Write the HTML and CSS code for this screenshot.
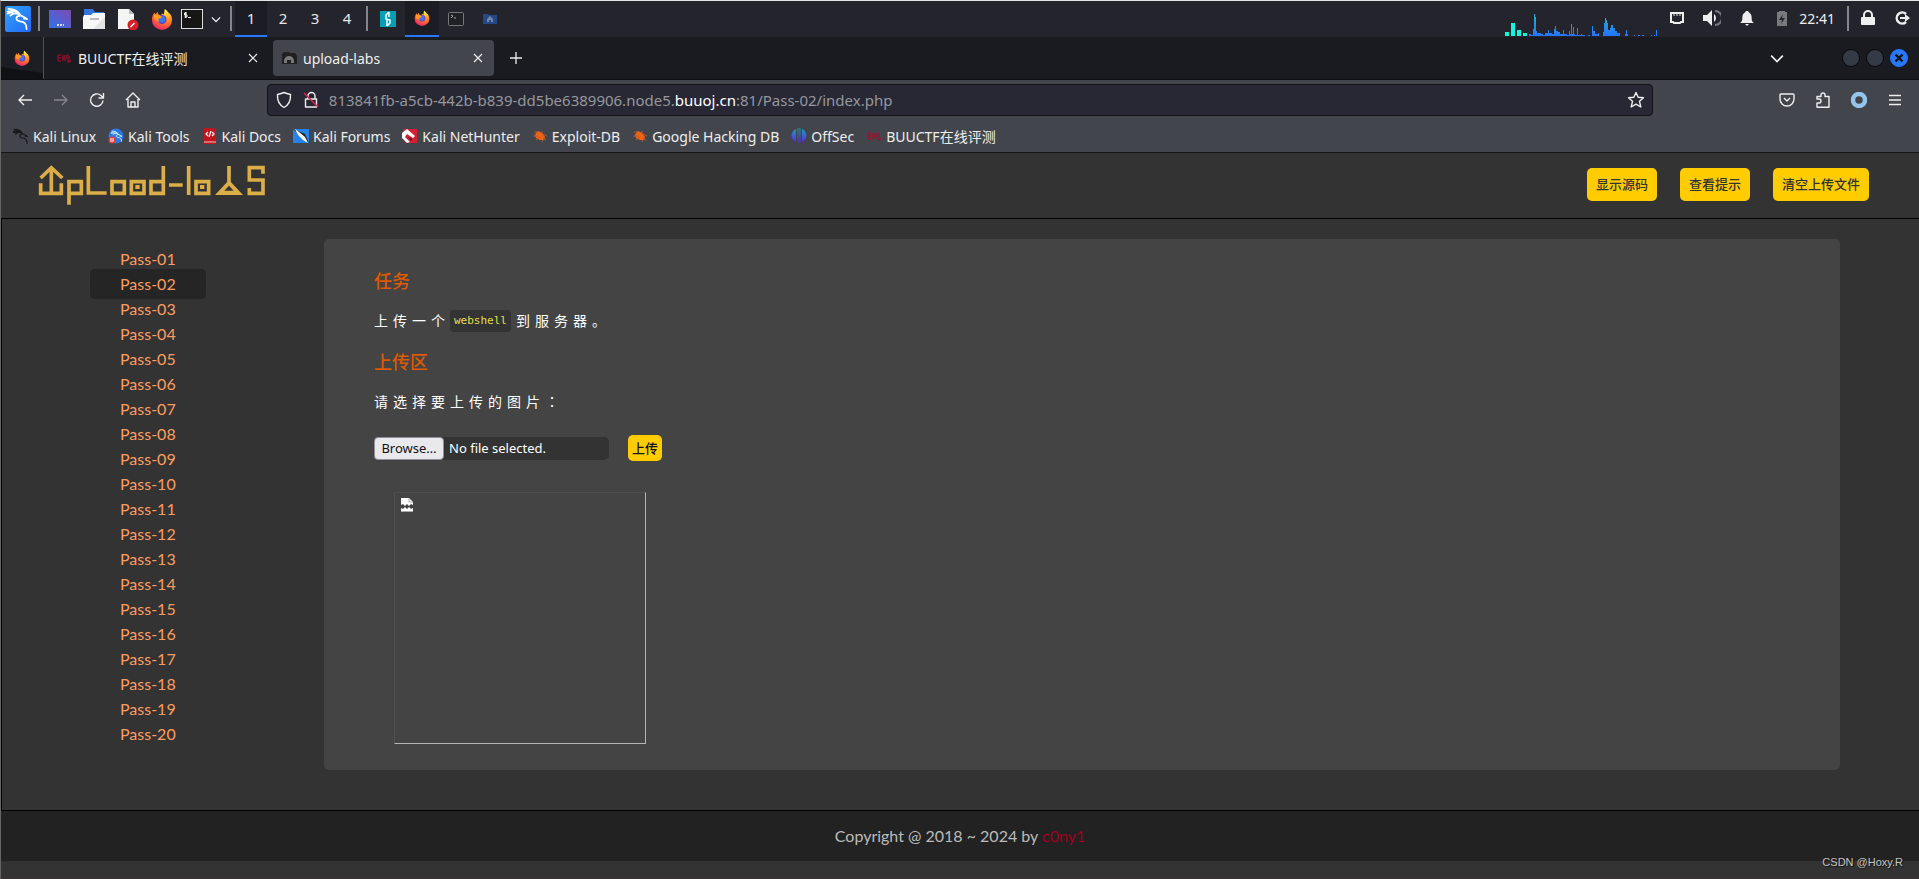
FILE: index.html
```html
<!DOCTYPE html>
<html lang="zh-CN">
<head>
<meta charset="utf-8">
<title>upload-labs</title>
<link rel="stylesheet" href="styles.css">
</head>
<body>
<svg class="defs" aria-hidden="true">
  <defs>
    <radialGradient id="fx" cx="0.7" cy="0.1" r="1"><stop offset="0" stop-color="#fff04a"/><stop offset="0.35" stop-color="#ffa51e"/><stop offset="0.7" stop-color="#ff5a3c"/><stop offset="1" stop-color="#e3197a"/></radialGradient>
    <linearGradient id="kb" x1="0" y1="0" x2="1" y2="1"><stop offset="0" stop-color="#2fa4fb"/><stop offset="1" stop-color="#2468f5"/></linearGradient>
    <linearGradient id="desk" x1="0" y1="1" x2="1" y2="0"><stop offset="0" stop-color="#3272e6"/><stop offset="1" stop-color="#7e4ab4"/></linearGradient>
    <linearGradient id="off" x1="0" y1="0" x2="0" y2="1"><stop offset="0" stop-color="#17a8b5"/><stop offset="1" stop-color="#5a22e8"/></linearGradient>
    <linearGradient id="graph" x1="0" y1="38" x2="0" y2="105" gradientUnits="userSpaceOnUse"><stop offset="0" stop-color="#18b9d2"/><stop offset="1" stop-color="#2673ff"/></linearGradient>
  </defs>
  <symbol id="firefox" viewBox="0 0 24 24"><path fill="url(#fx)" d="M15 1c2 1 3 3 4 4 3 2 4 5 4 8a11 11 0 0 1-22 0c0-3 1-6 3-8l1 2 2-3 1 3 3 1 1-2 2 1z"/><circle cx="12" cy="12.500" r="5" fill="#6040c8"/><path fill="#3b75e8" d="M8 14a4.500 4.500 0 0 0 8-1l-2-5-4 3z"/><path fill="#ff9a22" d="M3 7l5 1 4 1-1 2-3 1 1 3-3-1-3-2z"/></symbol>
  <symbol id="dragon" viewBox="0 0 24 24"><path d="M1 5c6-2 10-1 14 4M2 2c6 0 10 2 13 7M4 9c3-3 7-3 11 0l4 2 3 2-4-1M15 9c-6 0-6 5-1 6 5 0 7 3 7 8M1 7c4-2 6-1 7 0" fill="none" stroke="currentColor" stroke-width="1.800" stroke-linecap="round"/></symbol>
  <symbol id="buu" viewBox="0 0 16 16"><path d="M2 5h3M2 8h3M2 11h3M2 5v6M7 5v6M7 8h2M9 5v6M11 5v4M11 5h2M13 6v3M12 10h2v2h-2z" fill="none" stroke="#a50d2c" stroke-width="1.200"/></symbol>
  <symbol id="bug" viewBox="0 0 16 16"><path fill="#ef6414" d="M4 5l2-2 4 2 3 4-1 3-4 0-4-2-1-3z"/><path d="M2 4h4M1 8h5M4 12l4-3M10 3l0 3M11 6l4 2M10 14l2-4M14 12l-3-2" fill="none" stroke="#b65b2c" stroke-width="1"/></symbol>
  <symbol id="close" viewBox="0 0 12 12"><path d="M2 2l8 8M10 2l-8 8" stroke="currentColor" stroke-width="1.200"/></symbol>
  <symbol id="down" viewBox="0 0 12 12"><path d="M1 4l5 5 5-5" fill="none" stroke="currentColor" stroke-width="1.500"/></symbol>
</svg>

<div class="screen">
  <div class="desktop-panel">
    <button class="cell" aria-label="Applications"><svg class="s26" viewBox="0 0 26 26"><rect width="26" height="26" rx="2" fill="url(#kb)"/><svg x="1" y="1" width="24" height="23" color="#fff"><use href="#dragon"/></svg></svg></button>
    <i class="sep"></i>
    <button class="cell" aria-label="Desktop"><svg class="s22" viewBox="0 0 22 22"><rect y="2" width="22" height="18" fill="url(#desk)"/><path d="M8 17h2M11 17h2M14 17h1" stroke="#fff" stroke-width="1.500"/></svg></button>
    <button class="cell" aria-label="Files"><svg class="s22" viewBox="0 0 22 22"><path d="M1 1h9l2 3h9v5H1z" fill="#3274dc"/><path d="M0 9l1-2h7l2-2h12v16H0z" fill="#f7f7f7"/><path d="M22 9v12H10z" fill="#e4e4e4"/><path d="M7 11h9" stroke="#bbb" stroke-width="2"/></svg></button>
    <button class="cell" aria-label="Text editor"><svg class="s22" viewBox="0 0 22 22"><path d="M1 1h11l5 5v15H1z" fill="#f5f5f5"/><path d="M12 1v5h5z" fill="#bbb"/><circle cx="16" cy="17" r="5.500" fill="#d61f26"/><path d="M13.500 19l4-4" stroke="#fff" stroke-width="1.500"/></svg></button>
    <button class="cell" aria-label="Firefox"><svg class="s22"><use href="#firefox"/></svg></button>
    <button class="cell narrow" aria-label="Terminal"><svg class="s22" viewBox="0 0 22 22"><rect x="0.500" y="1.500" width="21" height="19" fill="#161616" stroke="#ddd"/><path d="M6 5H3.500v2H6v2H3.500M4.700 4v6M7 9.500h3" fill="none" stroke="#fff"/></svg></button>
    <button class="cell tight" aria-label="More terminals"><svg class="s10"><use href="#down"/></svg></button>
    <i class="sep"></i>
    <button class="space on">1</button><button class="space">2</button><button class="space">3</button><button class="space">4</button>
    <i class="sep"></i>
    <button class="cell" aria-label="Burp Suite"><svg class="s16" viewBox="0 0 16 16"><rect width="16" height="16" fill="#049fb4"/><path d="M9 1L6 4v4l4 1v3l-3 3M9 1v5M7 9v6" fill="none" stroke="#fff" stroke-width="1.500"/></svg></button>
    <button class="cell on" aria-label="Firefox window"><svg class="s16"><use href="#firefox"/></svg></button>
    <button class="cell" aria-label="Terminal window"><svg class="s16" viewBox="0 0 16 16"><rect x="0.500" y="1.500" width="15" height="13" rx="1" fill="#202124" stroke="#77777b"/><path d="M3 4l2 1-2 2M6 7h2" fill="none" stroke="#aaa"/></svg></button>
    <button class="cell" aria-label="Files window"><svg class="s16" viewBox="0 0 16 16"><path d="M1 3h5l1 1h8v9H1z" fill="#254986"/><path d="M8 5l3 3v3H9V9H7v2H5V8z" fill="#7187aa"/></svg></button>
    <div class="panel-right">
      <svg class="graph" viewBox="75 36 465 69"><path fill="#0ff7dc" d="M78 93h12v12H78zM96 66h12v39H96zM114 87h12v18h-12zM132 96h12v9h-12z"/><path fill="url(#graph)" d="M150 105v-6h6v3h6v-18h3V39h3v9h3v42h3v6h12v3h6v3h6v-6h9v-9h3v9h9v3h6v-15h3v-9h3v15h6v3h6v6h9v-12h3v12h9v3h6v-12h3v9h3v-30h3v30h3v-21h3v21h3v3h6v-21h3v21h9v-3h3v3h9v3h9v-3h6v3h6v-30h3v15h6v9h9v-3h3v9h12v-12h3v-27h3v-15h3v6h3v9h3v21h6v-6h3v-9h6v9h6v9h6v6h9v12h9v-3h3v3h3v-9h3v-12h3v12h3v9zM465 102h3v3h-3zM477 102h6v3h-6zM489 102h6v3h-6zM516 102h3v3h-3zM525 102h3v3h-3zM531 87h3v18h-3z"/></svg>
      <button class="tray" aria-label="Network"><svg class="s16" viewBox="0 0 16 16"><path d="M2 3h12v9h-2l-1 1H5l-1-1H2z" fill="none" stroke="currentColor" stroke-width="2"/><path d="M5 3v3M8 3v3M11 3v3" stroke="currentColor"/></svg></button>
      <button class="tray" aria-label="Volume"><svg class="s18" viewBox="0 0 18 18"><path d="M0 6h4l5-5v16l-5-5H0z" fill="currentColor"/><path d="M11 5a5 5 0 0 1 0 8z" fill="currentColor"/><path d="M12 2a7 7 0 0 1 0 14" fill="none" stroke="#77787c" stroke-width="2"/></svg></button>
      <button class="tray" aria-label="Notifications"><svg class="s16" viewBox="0 0 16 16"><path d="M1 13c3-2 2-4 2.500-7C4 3 6 3 7 1h2c1 2 3 2 3.500 5 .5 3-.5 5 2.500 7zM6 14h4l-2 2z" fill="currentColor"/></svg></button>
      <button class="tray" aria-label="Battery"><svg class="s16" viewBox="0 0 16 16"><path d="M5 1h6v1h2v14H3V2h2z" fill="#797a7e"/><path d="M9 4L5 10h3l-1 4 4-6H8z" fill="#25262c"/></svg></button>
      <time class="clock">22:41</time>
      <i class="sep last"></i>
      <button class="tray end" aria-label="Lock"><svg class="s16" viewBox="0 0 16 16"><rect x="1" y="7" width="14" height="8" rx="1" fill="currentColor"/><path d="M4 8V5a4 4 0 0 1 8 0v3" fill="none" stroke="currentColor" stroke-width="2"/></svg></button>
      <button class="tray end" aria-label="Log out"><svg class="s16" viewBox="0 0 16 16"><path d="M12 4a5.500 5.500 0 1 0 0 8" fill="none" stroke="currentColor" stroke-width="2.500"/><path d="M6 7h5V4l5 4-5 4V9H6z" fill="currentColor"/></svg></button>
    </div>
  </div>

  <div class="tab-strip">
    <button class="pinned" aria-label="Firefox View"><svg class="s16"><use href="#firefox"/></svg></button>
    <div class="tab"><svg class="s16"><use href="#buu"/></svg><span class="tab-title">BUUCTF在线评测</span><button class="tab-close" aria-label="Close tab"><svg class="s12"><use href="#close"/></svg></button></div>
    <div class="tab active"><svg class="s16" viewBox="0 0 16 16"><path d="M1 4l2-2h5l1 1h5l2 3v8H1z" fill="#202020"/><path d="M3 11a5 5 0 0 1 10 0v2h-3v-3H6v3H3z" fill="#77797c"/></svg><span class="tab-title">upload-labs</span><button class="tab-close" aria-label="Close tab"><svg class="s12"><use href="#close"/></svg></button></div>
    <button class="new-tab" aria-label="New tab"><svg class="s12" viewBox="0 0 12 12"><path d="M6 0v12M0 6h12" stroke="currentColor" stroke-width="1.300"/></svg></button>
    <div class="window-buttons">
      <button class="list-tabs" aria-label="List all tabs"><svg class="s14"><use href="#down"/></svg></button>
      <button class="round" aria-label="Minimize"></button>
      <button class="round" aria-label="Maximize"></button>
      <button class="round quit" aria-label="Close window"><svg class="s12" viewBox="0 0 12 12"><path d="M2.500 2.500l7 7M9.500 2.500l-7 7" stroke="#111" stroke-width="2.400"/></svg></button>
    </div>
  </div>

  <div class="nav-bar">
    <button class="tool" aria-label="Back"><svg class="s16" viewBox="0 0 16 16"><path d="M15 8H2M7 3L2 8l5 5" /></svg></button>
    <button class="tool off" aria-label="Forward"><svg class="s16" viewBox="0 0 16 16"><path d="M1 8h13M9 3l5 5-5 5"/></svg></button>
    <button class="tool" aria-label="Reload"><svg class="s16" viewBox="0 0 16 16"><path d="M14 8.500A6.200 6.200 0 1 1 12 3.500l2 2M14.500 1v5h-5"/></svg></button>
    <button class="tool" aria-label="Home"><svg class="s16" viewBox="0 0 16 16"><path d="M1 8l7-7 7 7M3 7v8h10V7M6 15v-5h4v5"/></svg></button>
    <div class="spring"></div>
    <div class="url-box">
      <svg class="s18 stroke" viewBox="0 0 18 18"><path d="M9 1.500c2 1 4 1.500 6.500 2 .3 5-1 10-6.500 13-5.500-3-6.800-8-6.500-13 2.500-.5 4.500-1 6.500-2z"/></svg>
      <svg class="s18 stroke" viewBox="0 0 18 18"><path d="M3.500 8h11v8h-11zM6 8V5a3.500 3.500 0 0 1 7 0v3"/><path d="M2 2l14 14" class="slash"/></svg>
      <a class="url" href="#">813841fb-a5cb-442b-b839-dd5be6389906.node5.<b>buuoj.cn</b>:81/Pass-02/index.php</a>
      <button class="star" aria-label="Bookmark this page"><svg class="s18 stroke" viewBox="0 0 18 18"><path d="M9 1.500l2.200 4.800 5.300.5-4 3.500 1.300 5.700L9 13.200 4.200 16l1.300-5.700-4-3.500 5.300-.5z"/></svg></button>
    </div>
    <div class="spring"></div>
    <button class="tool" aria-label="Pocket"><svg class="s16" viewBox="0 0 16 16"><path d="M2 2h12q1 0 1 1v4a7 7 0 0 1-14 0V3q0-1 1-1zM5 6l3 3 3-3"/></svg></button>
    <button class="tool" aria-label="Extensions"><svg class="s16" viewBox="0 0 16 16"><path d="M2 15.200V11h2a2 2 0 0 0 0-4H2V4.500h4V3a2 2 0 0 1 4 0v1.500h4v10.700z"/></svg></button>
    <button class="tool" aria-label="Account"><svg class="s16" viewBox="0 0 16 16"><circle class="donut" cx="8" cy="8" r="6"/></svg></button>
    <button class="tool" aria-label="Menu"><svg class="s16" viewBox="0 0 16 16"><path d="M2 3.500h12M2 8h12M2 12.500h12"/></svg></button>
  </div>

  <nav class="bookmarks">
    <a href="#"><svg class="s16 ink"><use href="#dragon"/></svg>Kali Linux</a>
    <a href="#"><svg class="s16" viewBox="0 0 16 16"><circle cx="8" cy="8" r="7.500" fill="#2879e6"/><svg x="3" y="2" width="12" height="12" color="#d9ecff"><use href="#dragon"/></svg><circle cx="4" cy="12" r="3.500" fill="#e33b3b"/><path d="M3 10v4M5 10v4" stroke="#fff"/></svg>Kali Tools</a>
    <a href="#"><svg class="s16" viewBox="0 0 16 16"><path d="M2 0h12v16H2z" fill="#c3141b"/><path d="M2 14h12" stroke="#f1c5c5"/><path d="M6 4L4 6l2 2M10 4l2 2-2 2M9 3L7 9" fill="none" stroke="#fff" stroke-width="1.200"/></svg>Kali Docs</a>
    <a href="#"><svg class="s16" viewBox="0 0 16 16"><path d="M0 1h16v14H0z" fill="#2583ed"/><path d="M0 1l12 5 4 9z" fill="#222"/><path d="M2 1l4 3 6 5 3 6-5-3-5-5z" fill="#fff"/></svg>Kali Forums</a>
    <a href="#"><svg class="s16" viewBox="0 0 16 16"><path d="M1 1h14v14H3z" fill="#d61f35"/><path d="M0 5l5-4 8 7-2 2-6-4-2 3 5 5-3 1-5-5z" fill="#fff"/><path d="M6 9l4 2-1 2z" fill="#222"/></svg>Kali NetHunter</a>
    <a href="#"><svg class="s16"><use href="#bug"/></svg>Exploit-DB</a>
    <a href="#"><svg class="s16"><use href="#bug"/></svg>Google Hacking DB</a>
    <a href="#"><svg class="s16" viewBox="0 0 16 16"><path d="M5 1v13C-1 11-1 4 5 1zM11 1v13c6-3 6-10 0-13zM6.500 0h1v15h-1zM8.500 0h1v15h-1z" fill="url(#off)"/></svg>OffSec</a>
    <a href="#"><svg class="s16"><use href="#buu"/></svg>BUUCTF在线评测</a>
  </nav>

  <header class="site-header">
    <svg class="logo" viewBox="111 45 684 126" role="img" aria-label="upload-labs"><g fill="none" stroke="#dbae48" stroke-width="11"><path d="M119 87l32-31 33 31M151 56v76M119 103v30h62v-30M204 167V98h37v35h-37M262 51v81h55M333 98h37v35h-37zM391 98h38v35h-38zM487 51v82h-37V98h37M504 108h41M563 51v87M585 98h38v35h-38zM684 51v48M786 74V56h-41v37h41v40h-41v-16"/></g><path fill="#dbae48" d="M403 108h13v12h-13zM597 108h13v12h-13z"/><path fill="#dbae48" fill-rule="evenodd" d="M684 93l42 45h-84zM684 110l-14 15h28z"/></svg>
    <div class="actions"><button class="gold">显示源码</button><button class="gold">查看提示</button><button class="gold">清空上传文件</button></div>
  </header>

  <main class="site-main">
    <ul class="menu">
      <li><a href="#">Pass-01</a></li><li><a href="#" class="current">Pass-02</a></li><li><a href="#">Pass-03</a></li><li><a href="#">Pass-04</a></li><li><a href="#">Pass-05</a></li><li><a href="#">Pass-06</a></li><li><a href="#">Pass-07</a></li><li><a href="#">Pass-08</a></li><li><a href="#">Pass-09</a></li><li><a href="#">Pass-10</a></li><li><a href="#">Pass-11</a></li><li><a href="#">Pass-12</a></li><li><a href="#">Pass-13</a></li><li><a href="#">Pass-14</a></li><li><a href="#">Pass-15</a></li><li><a href="#">Pass-16</a></li><li><a href="#">Pass-17</a></li><li><a href="#">Pass-18</a></li><li><a href="#">Pass-19</a></li><li><a href="#">Pass-20</a></li>
    </ul>
    <section class="task">
      <h3>任务</h3>
      <p>上传一个<code>webshell</code>到服务器。</p>
      <h3>上传区</h3>
      <p id="pick">请选择要上传的图片<span class="colon">：</span></p>
      <form class="upload">
        <div class="file" role="group" aria-labelledby="pick"><button type="button" class="browse">Browse…</button><span>No file selected.</span></div>
        <button type="button" class="gold submit">上传</button>
      </form>
      <div class="preview"><svg class="broken" viewBox="0 0 12 14"><path d="M0 0h8l4 4v3l-2-1-2 2-2-2-2 2-2-2-2 1zM0 10l2 1 2-2 2 2 2-2 2 2 2-1v4H0z" fill="#fff"/><path d="M8 0v4h4M0 13.500h12" fill="none" stroke="#aaa"/></svg></div>
    </section>
  </main>

  <footer class="site-footer">Copyright @ 2018 ~ 2024 by&nbsp;<a href="#">c0ny1</a></footer>
  <div class="watermark">CSDN @Hoxy.R</div>
</div>
</body>
</html>
```
FILE: styles.css
```css
* { box-sizing: border-box; }
body { margin: 0; background: #333; font-family: "Noto Sans", "Noto Sans CJK SC", sans-serif; }
button { border: 0; margin: 0; padding: 0; background: none; color: inherit; font: inherit; }
a { text-decoration: none; color: inherit; }
svg { display: block; flex: none; }
.defs { position: absolute; width: 0; height: 0; }
.s10 { width: 10px; height: 10px; }
.s12 { width: 12px; height: 12px; }
.s14 { width: 14px; height: 14px; }
.s16 { width: 16px; height: 16px; }
.s18 { width: 18px; height: 18px; }
.s22 { width: 22px; height: 22px; }
.s26 { width: 26px; height: 26px; }

.screen { position: relative; min-height: 100vh; border: solid #666; border-width: 1px 0 1px 1px; border-top-color: #e0e5e5; border-bottom-color: #3e3438; }

.desktop-panel { display: flex; align-items: stretch; height: 36px; background: #23242c; color: #eee; font-size: 15px; }
.cell { display: flex; align-items: center; justify-content: center; width: 34px; }
.cell.narrow { width: 26px; }
.cell.tight { width: 22px; }
.cell.on, .space.on { background: #1b1c24; border-bottom: 2px solid #2777ff; }
.sep { width: 2px; margin: 5px 3px 6px; background: #85868a; }
.space { width: 32px; padding-bottom: 2px; color: #e8e8e8; }
.space.on { padding-bottom: 0; }
.panel-right { display: flex; margin-left: auto; }
.graph { width: 155px; height: 23px; align-self: flex-end; margin-bottom: 1px; }
.tray { display: flex; align-items: center; justify-content: center; width: 35px; padding-bottom: 2px; }
.tray.end { width: 34px; }
.clock { display: flex; align-items: center; padding-bottom: 2px; font-size: 14px; }
.sep.last { margin-left: 12px; margin-right: 2px; }

.tab-strip { display: flex; align-items: center; height: 43px; background: #1a1b20; color: #eee; font-size: 14px; border-bottom: 1px solid #0d0e11; }
.pinned { display: flex; align-items: center; justify-content: center; align-self: stretch; width: 43px; border-right: 1px solid #505155; background: linear-gradient(8deg, #101115 24%, #1d1e23 26%); }
.tab { display: flex; align-items: center; gap: 6px; width: 221px; height: 36px; margin-left: 4px; padding: 0 10px 0 8px; border-radius: 4px; }
.tab.active { background: #43454c; }
.tab-title { flex: 1; }
.new-tab { margin-left: 16px; }
.window-buttons { display: flex; align-items: center; gap: 6px; margin-left: auto; padding-right: 11px; }
.list-tabs { margin-right: 52px; }
.round { display: flex; align-items: center; justify-content: center; width: 18px; height: 18px; border: 1px solid #090a0c; border-radius: 50%; background: #353a47; }
.round.quit { border-color: #2777ff; background: #2777ff; }

.nav-bar { display: flex; align-items: center; height: 40px; padding: 0 6px; background: #43454c; color: #eee; }
.tool { display: flex; align-items: center; justify-content: center; width: 36px; height: 36px; }
.tool.off { color: #85868b; }
.tool path, .stroke path { fill: none; stroke: currentColor; stroke-width: 1.4; stroke-linejoin: round; }
.stroke path.slash { stroke: #e2224f; }
.tool .donut { fill: none; stroke: #94c5ec; stroke-width: 4.5; }
.spring { flex: 6 1 0; }
.url-box { display: flex; align-items: center; gap: 9px; flex: 71 1 0; height: 32px; padding: 0 7px; border: 1px solid #111216; border-radius: 4px; background: #272834; font-size: 15px; }
.url { flex: 1; color: #96979d; }
.url b { color: #fff; font-weight: 400; }

.bookmarks { display: flex; align-items: center; gap: 12px; height: 33px; padding: 0 12px; border-bottom: 1px solid #16171a; background: #43454c; color: #eee; font-size: 14px; }
.bookmarks a { display: flex; align-items: center; gap: 4px; white-space: nowrap; }
.ink { color: #16171a; }

.site-header { display: flex; align-items: center; justify-content: space-between; height: 66px; padding: 0 50px 2px 37px; border-bottom: 1px solid #000; background: #333; }
.logo { width: 228px; height: 42px; }
.actions { display: flex; gap: 23px; }
.gold { height: 33px; padding: 0 9px 2px; border-radius: 5px; background: #fc0; color: #333; font: 500 13px "Noto Sans CJK SC", sans-serif; }

.site-main { display: grid; grid-template-columns: 322px 1fr; align-items: start; padding: 20px 79px 40px 0; border-left: 1px solid #000; border-bottom: 1px solid #000; }
.menu { margin: 0; padding: 7px 0 0 88px; list-style: none; font: 16px/25px Lato, sans-serif; color: #fc9d5f; }
.menu li { display: flex; align-items: center; height: 25px; }
.menu a { width: 116px; height: 30px; padding-left: 30px; line-height: 30px; border-radius: 5px; }
.menu .current { background: #252525; }
.task { padding: 29px 50px 26px; border-radius: 5px; background: #444; color: #fff; }
.task h3 { margin: 0 0 16px; color: #dd5a00; font: 500 18px/24px "Noto Sans CJK SC", sans-serif; }
.task p { display: flex; align-items: flex-end; height: 24px; margin: 0 0 17px; font: 14px/24px "Noto Sans CJK SC", sans-serif; letter-spacing: 5px; }
.task code { margin-right: 5px; padding: 0 4px; border-radius: 4px; background: #333; color: #e6db55; font: 11px/22px "DejaVu Sans Mono", monospace; letter-spacing: normal; }
.colon { font-family: "Noto Sans CJK TC", sans-serif; }
.upload { display: flex; align-items: center; gap: 19px; margin: 22px 0 31px; }
.file { display: flex; align-items: center; gap: 5px; width: 235px; height: 23px; border-radius: 5px; background: #333; font-size: 13px; }
.browse { width: 70px; height: 23px; border: 1px solid #8f8f9d; border-radius: 4px; background: #e9e9ed; color: #111; }
.submit { height: 26px; padding: 0 4px 2px; color: #111; }
.preview { width: 252px; height: 252px; margin-left: 20px; padding: 5px 6px; border: 1px solid; border-color: #4f4f4f #b5b5b5 #b5b5b5 #4f4f4f; }
.broken { width: 12px; height: 14px; }

.site-footer { display: flex; align-items: center; justify-content: center; height: 50px; padding-bottom: 2px; background: #222; color: #bbb; font: 16px Lato, sans-serif; }
.site-footer a { color: #a0001e; }
.watermark { position: absolute; right: 16px; bottom: 10px; color: #c4c4c4; font: 11px "Liberation Sans", sans-serif; text-shadow: 1px 1px 1px #111; }
```
